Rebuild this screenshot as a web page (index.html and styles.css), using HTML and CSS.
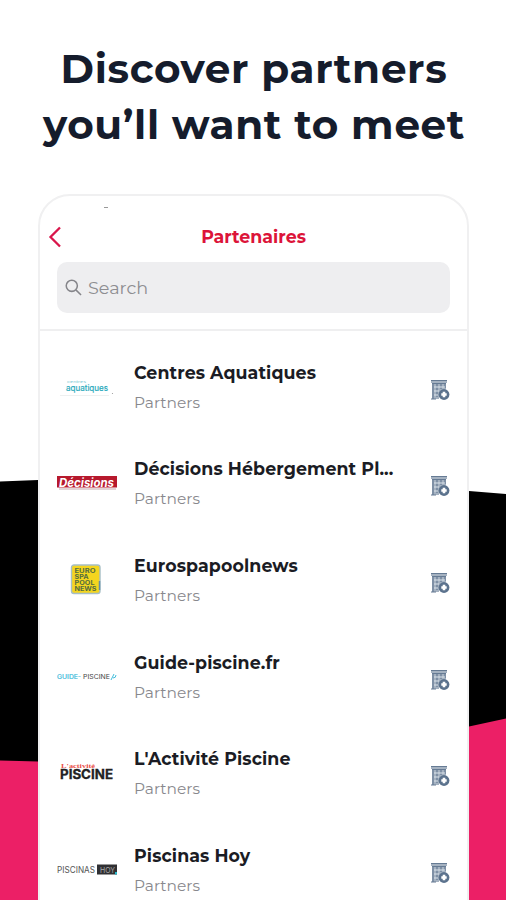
FILE: index.html
```html
<!DOCTYPE html>
<html lang="en">
<head>
<meta charset="utf-8">
<title>Discover partners</title>
<link rel="stylesheet" href="styles.css">
</head>
<body>
<svg class="backdrop" viewBox="0 0 506 900" aria-hidden="true">
  <path d="M0 481.500L38 480H469V491L506 494V780H0Z" fill="#000"/>
  <path d="M0 760.500L38 761.500H250L469 726.500L506 718.500V900H0Z" fill="#ec1f66"/>
</svg>
<svg class="sprites" aria-hidden="true">
  <symbol id="stand" viewBox="0 0 20 22">
    <path d="M1 1h16v3H1zM2 4h14v6.500a6 6 0 0 0-7 5V20H2z" fill="#a5b2c1"/>
    <path d="M1 1.500h16M2 4.500h14M3 4v16M7 4v14M11 4v6M15 4v5M1 20h5" stroke="#667b94" stroke-width="1.200" fill="none"/>
    <path d="M4 8h11M4 12h5M4 16h4" stroke="#dce4eb" stroke-width="1"/>
    <circle cx="14" cy="15.500" r="5.400" fill="#5b728d"/>
    <path d="M14 12.800v5.400M11.300 15.500h5.400" stroke="#fff" stroke-width="2.600"/>
  </symbol>
</svg>
<main class="page">
  <h1 class="headline"><span>Discover partners</span><span>you’ll want to meet</span></h1>
  <section class="phone">
    <header class="top">
      <i class="speck"></i>
      <div class="nav">
        <svg class="back" viewBox="0 0 14 22"><path d="M12 1.500L2.500 11L12 20.500" fill="none" stroke="#d9164b" stroke-width="2.300"/></svg>
        <h2>Partenaires</h2>
      </div>
      <div class="search">
        <svg viewBox="0 0 18 18"><circle cx="7.200" cy="7.200" r="5.900"/><path d="M11.500 11.500L17 17"/></svg>
        <span>Search</span>
      </div>
    </header>
    <ul class="list">
      <li>
        <svg class="logo" viewBox="0 0 60 40"><text x="10" y="12" font-size="3.500" textLength="19" lengthAdjust="spacingAndGlyphs" fill="#7cc8d3">centres</text><text x="9" y="19.500" font-size="8.500" textLength="42" lengthAdjust="spacingAndGlyphs" fill="#27a9bb" stroke="#27a9bb" stroke-width=".2">aquatiques</text><path d="M3 24.500H52" stroke="#eef0f0"/><circle cx="55.500" cy="22.500" r=".6" fill="#999"/></svg>
        <div class="text"><h3>Centres Aquatiques</h3><p>Partners</p></div>
        <svg class="add"><use href="#stand"/></svg>
      </li>
      <li>
        <svg class="logo" viewBox="0 0 60 40"><path d="M0 9H60V20.500H0Z" fill="#b7192d"/><path d="M2 22H59" stroke="#c5a9ad"/><text x="2" y="19.500" font-size="12" font-weight="700" font-style="italic" textLength="55" lengthAdjust="spacingAndGlyphs" fill="#fff">Décisions</text></svg>
        <div class="text"><h3>Décisions Hébergement Pl...</h3><p>Partners</p></div>
        <svg class="add"><use href="#stand"/></svg>
      </li>
      <li>
        <svg class="logo" viewBox="0 0 60 40"><rect x="14.500" y="1" width="28.500" height="28.500" rx="2.500" fill="#f4d51f" stroke="#a6bec5" stroke-width="1.400"/><g font-size="6.200" font-weight="700" fill="#536c3f"><text x="17.500" y="9" textLength="21" lengthAdjust="spacingAndGlyphs">EURO</text><text x="17.500" y="15" textLength="14" lengthAdjust="spacingAndGlyphs">SPA</text><text x="17.500" y="21" textLength="20" lengthAdjust="spacingAndGlyphs">POOL</text><text x="17.500" y="27" textLength="22" lengthAdjust="spacingAndGlyphs">NEWS</text></g><path d="M42.500 17v9" stroke="#638caa" stroke-width="1.500"/></svg>
        <div class="text"><h3>Eurospapoolnews</h3><p>Partners</p></div>
        <svg class="add"><use href="#stand"/></svg>
      </li>
      <li>
        <svg class="logo" viewBox="0 0 60 40"><g font-size="6.500"><text x="0" y="18" textLength="24" lengthAdjust="spacingAndGlyphs" fill="#42bddb" stroke="#42bddb" stroke-width=".2">GUIDE-</text><text x="26" y="18" textLength="27" lengthAdjust="spacingAndGlyphs" fill="#444">PISCINE</text></g><path d="M54 19L57 13M56 17q3 0 3-3" fill="none" stroke="#42bddb"/></svg>
        <div class="text"><h3>Guide-piscine.fr</h3><p>Partners</p></div>
        <svg class="add"><use href="#stand"/></svg>
      </li>
      <li>
        <svg class="logo" viewBox="0 0 60 40"><text x="4" y="10.500" font-size="7" font-weight="700" font-family="Liberation Serif, serif" textLength="34" lengthAdjust="spacingAndGlyphs" fill="#ea4e45">L'activité</text><text x="3" y="21.500" font-size="13" font-weight="700" textLength="53" lengthAdjust="spacingAndGlyphs" fill="#222" stroke="#222" stroke-width=".3">PISCINE</text></svg>
        <div class="text"><h3>L'Activité Piscine</h3><p>Partners</p></div>
        <svg class="add"><use href="#stand"/></svg>
      </li>
      <li>
        <svg class="logo" viewBox="0 0 60 40"><text x="0" y="19" font-size="9" textLength="38" lengthAdjust="spacingAndGlyphs" fill="#555">PISCINAS</text><path d="M40 10.500H60V20.500H40Z" fill="#303033"/><text x="43" y="18.500" font-size="8" textLength="15" lengthAdjust="spacingAndGlyphs" fill="#aaa">HOY</text><path d="M58 18h2v2.500h-2z" fill="#27b9cc"/></svg>
        <div class="text"><h3>Piscinas Hoy</h3><p>Partners</p></div>
        <svg class="add"><use href="#stand"/></svg>
      </li>
    </ul>
  </section>
</main>
</body>
</html>
```

FILE: styles.css
```css
* { box-sizing: border-box; }
body { margin: 0; background: #fff; font-family: Montserrat, Inter, sans-serif; }
h1, h2, h3, p, ul { margin: 0; padding: 0; }
.sprites { position: absolute; width: 0; height: 0; }
.backdrop { position: absolute; inset: 0; width: 506px; height: 900px; }
.page { position: relative; height: 900px; overflow: hidden; display: flex; flex-direction: column; align-items: center; }
.headline { height: 194px; flex: none; padding: 41px 0 0 2px; font-size: 40.500px; font-weight: 700; letter-spacing: .65px; line-height: 56px; color: #151c2c; display: flex; flex-direction: column; align-items: center; white-space: nowrap; }
.phone { width: 431px; height: 740px; flex: none; margin-left: 1px; border: 2px solid #f0f0f1; border-radius: 32px 32px 0 0; background: #fff; overflow: hidden; }
.top { height: 135px; border-bottom: 2px solid #efeff0; padding: 11px 17px 0; display: flex; flex-direction: column; }
.speck { width: 4px; height: 1px; background: #999; margin-left: 47px; }
.nav { height: 54px; display: flex; align-items: center; position: relative; margin-top: 2px; justify-content: center; }
.back { position: absolute; left: -9px; top: 16px; width: 14px; height: 22px; }
.nav h2 { font-size: 17.400px; font-weight: 700; color: #dc1439; margin-top: -2px; }
.search { height: 51px; margin-top: -2px; border-radius: 10px; background: #eeeef0; display: flex; align-items: center; gap: 6px; padding-left: 8px; color: #8d8d91; font-size: 17.600px; }
.search svg { width: 17px; height: 17px; fill: none; stroke: #85858a; stroke-width: 1.600; }
.list { list-style: none; padding-top: 8px; }
.list li { height: 96.650px; padding: 0 17px; display: flex; align-items: center; }
.logo { width: 60px; height: 40px; flex: none; font-family: Inter, sans-serif; margin-top: 7px; }
.text { flex: 1; padding-left: 17px; white-space: nowrap; }
.text h3 { font-size: 17.400px; font-weight: 700; letter-spacing: .1px; line-height: 26px; color: #1b1c24; margin-top: -1px; }
.text p { font-size: 15.400px; line-height: 22px; margin-top: 6px; color: #88888d; }
.add { width: 20px; height: 22px; flex: none; margin-top: 5px; }
```
